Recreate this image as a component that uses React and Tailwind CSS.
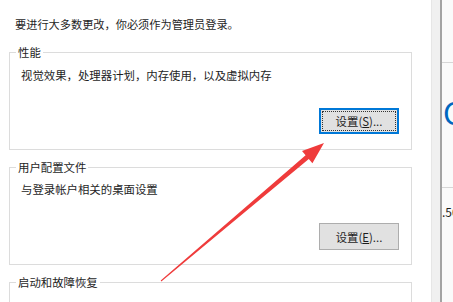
import React from "react";

const font = { fontFamily: '"Noto Sans CJK SC", "Noto Sans", sans-serif' };

function Group({ label, children, className }) {
  return (
    <fieldset className={`border border-[#dcdcdc] mx-[9px] w-[403px] px-0 ${className || ""}`}>
      <legend className="ml-[6px] px-[2px] text-[11.4px] leading-[14px] text-[#1e1e1e]">{label}</legend>
      {children}
    </fieldset>
  );
}

export default function App() {
  return (
    <div className="relative flex h-[302px] w-[453px] overflow-hidden bg-white" style={font}>
      <div className="flex w-[431px] shrink-0 flex-col bg-white">
        <div className="mt-[17px] pl-[15px] text-[11.2px] leading-[14px] text-[#1e1e1e]">
          要进行大多数更改，你必须作为管理员登录。
        </div>
        <Group label="性能" className="mt-[14px]">
          <div className="pl-[11px] pt-[9px] text-[11.4px] leading-[14px] text-[#1e1e1e]">
            视觉效果，处理器计划，内存使用，以及虚拟内存
          </div>
          <div className="mt-[26px] mb-[15px] flex justify-end pr-[12px]">
            <div className="flex h-[26px] w-[80px] items-center justify-center border-2 border-[#0078d7] bg-[#e1e1e1] p-[1px]">
              <div className="flex h-full w-full items-center justify-center border border-dotted border-[#333] text-[11.4px] leading-[14px] text-[#1e1e1e]">
                设置(<span className="underline">S</span>)...
              </div>
            </div>
          </div>
        </Group>
        <Group label="用户配置文件" className="mt-[10px]">
          <div className="pl-[11px] pt-[8px] text-[11.4px] leading-[14px] text-[#1e1e1e]">
            与登录帐户相关的桌面设置
          </div>
          <div className="mt-[27px] mb-[14px] flex justify-end pr-[12px]">
            <div className="flex h-[27px] w-[80px] items-center justify-center border border-[#adadad] bg-[#e1e1e1] text-[11.4px] leading-[14px] text-[#1e1e1e]">
              设置(<span className="underline">E</span>)...
            </div>
          </div>
        </Group>
        <Group label="启动和故障恢复" className="mt-[10px]">
          <div className="pl-[11px] pt-[12px] text-[11.4px] leading-[14px] text-[#1e1e1e]">
            系统启动、系统故障和调试信息
          </div>
          <div className="h-[60px]" />
        </Group>
      </div>
      <div className="w-[9px] shrink-0 border-l border-[#e6e6e6] bg-[#f0f0f0]" />
      <div className="w-[2px] shrink-0 bg-[#a3a3a3]" />
      <div className="flex flex-1 flex-col overflow-hidden bg-[#fafafa]">
        <div className="h-[63px] border-b border-[#d6d6d6]" />
        <div className="h-[124px] overflow-hidden pt-[29px] pl-[1px] text-[31px] leading-[40px] text-[#0067c0] whitespace-nowrap">
          C
        </div>
        <div className="border-t border-[#d6d6d6] pt-[17px] text-[12px] leading-[14px] text-[#1e1e1e] whitespace-nowrap">
          .50
        </div>
      </div>
      <svg className="pointer-events-none absolute left-0 top-0" width="453" height="302" viewBox="0 0 453 302">
        <polygon
          points="324,143 312.4,163.3 308.8,159.1 161.3,281.4 160.7,280.6 305.6,155.3 302,151.1"
          fill="#ef3b3b"
        />
      </svg>
    </div>
  );
}
